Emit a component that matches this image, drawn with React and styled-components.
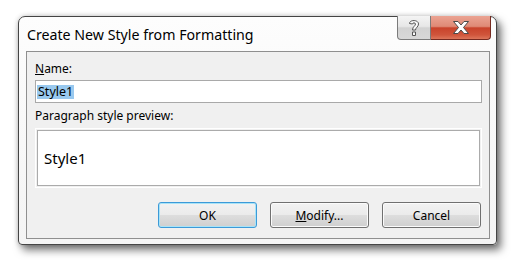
import React from "react";
import styled, { createGlobalStyle } from "styled-components";

const GlobalStyle = createGlobalStyle`
  html, body {
    margin: 0;
    padding: 0;
    background: #ffffff;
  }
  body {
    font-family: "Noto Sans", "Open Sans", sans-serif;
    color: #000;
  }
`;

const Page = styled.div`
  width: 519px;
  height: 270px;
  box-sizing: border-box;
  padding: 16px 0 0 18px;
`;

const Window = styled.div`
  width: 479px;
  height: 229px;
  box-sizing: border-box;
  border: 1px solid #454545;
  border-radius: 7px 7px 4px 4px;
  background: linear-gradient(#fdfdfd, #f4f4f4);
  box-shadow: 4px 5px 9px rgba(0, 0, 0, 0.55), 0 0 5px rgba(0, 0, 0, 0.2);
  display: flex;
  flex-direction: column;
  padding: 0 6px 5px 7px;
`;

const TitleBar = styled.div`
  height: 34px;
  display: flex;
  align-items: center;
  justify-content: space-between;
`;

const Title = styled.span`
  font-size: 14.2px;
  padding-left: 1px;
  padding-top: 1px;
`;

const CaptionGroup = styled.div`
  align-self: flex-start;
  display: flex;
  margin-top: -1px;
  margin-right: -1px;
`;

const CaptionButton = styled.div`
  height: 24px;
  width: ${(p) => p.$w}px;
  box-sizing: border-box;
  display: flex;
  align-items: center;
  justify-content: center;
  border: 1px solid ${(p) => (p.$close ? "#762a20" : "#7b7b7b")};
  border-top: none;
  border-left: ${(p) => (p.$close ? "none" : undefined)};
  border-radius: ${(p) => (p.$close ? "0 0 4px 0" : "0 0 0 4px")};
  background: ${(p) =>
    p.$close
      ? "linear-gradient(#eba493 0%, #df8a76 45%, #c9432b 52%, #d0553b 82%, #dd765b 100%)"
      : "linear-gradient(#f4f4f4 0%, #e7e7e7 45%, #d2d2d2 52%, #d8d8d8 100%)"};
`;

const Client = styled.div`
  flex: 1;
  border: 1px solid #8f8f8f;
  background: #f0f0f0;
  display: flex;
  flex-direction: column;
  padding: 9px 7px 10px 8px;
`;

const Label = styled.div`
  font-size: 12px;
  line-height: 16px;
  margin-bottom: ${(p) => p.$gap}px;
`;

const Input = styled.div`
  height: 23px;
  box-sizing: border-box;
  border: 1px solid #a9a9a9;
  background: #fff;
  display: flex;
  align-items: center;
  padding-left: 1px;
  margin-bottom: 5px;
`;

const Selected = styled.span`
  background: #99c9ef;
  font-size: 12.5px;
  line-height: 14px;
  padding: 0 1px;
`;

const PreviewFrame = styled.div`
  height: 60px;
  box-sizing: border-box;
  border: 1px solid #fff;
  padding: 1px;
  display: flex;
  margin-top: 4px;
`;

const Preview = styled.div`
  flex: 1;
  border: 1px solid #ababab;
  background: #fff;
  display: flex;
  align-items: center;
  padding-left: 6px;
  font-size: 15px;
`;

const ButtonRow = styled.div`
  margin-top: auto;
  display: flex;
  justify-content: flex-end;
  gap: 13px;
  padding-right: 1px;
`;

const Button = styled.div`
  width: 99px;
  height: 26px;
  box-sizing: border-box;
  border: 1px solid ${(p) => (p.$default ? "#3c9ad8" : "#707070")};
  border-radius: 3px;
  display: flex;
  align-items: center;
  justify-content: center;
  font-size: 12px;
  background: linear-gradient(#f2f2f2 0%, #ebebeb 48%, #dddddd 52%, #cfcfcf 100%);
  box-shadow: inset 0 0 0 1px ${(p) => (p.$default ? "#a8e3f7" : "#fbfbfb")};
`;

const HelpGlyph = () => (
  <svg width="12" height="18" viewBox="0 0 12 18">
    <path
      d="M1.5 4.5 C1.5 0.5 10.5 0.5 10.5 5 C10.5 8 7.5 8.5 7.5 11 L4.5 11 C4.5 7.5 7.5 7 7.5 5 C7.5 3.5 4.5 3.5 4.5 5 Z M4.5 13 L7.5 13 L7.5 16.5 L4.5 16.5 Z"
      fill="#fafafa"
      stroke="#555"
      strokeWidth="1"
      strokeLinejoin="round"
    />
  </svg>
);

const CloseGlyph = () => (
  <svg width="18" height="15" viewBox="0 0 18 15">
    <path
      d="M1.5 1.5 L6 1.5 L9 5 L12 1.5 L16.5 1.5 L11.5 7.5 L16.5 13.5 L12 13.5 L9 10 L6 13.5 L1.5 13.5 L6.5 7.5 Z"
      fill="#ffffff"
      stroke="#4a4a4a"
      strokeWidth="1"
      strokeLinejoin="round"
    />
  </svg>
);

export default function App() {
  return (
    <Page>
      <GlobalStyle />
      <Window>
        <TitleBar>
          <Title>Create New Style from Formatting</Title>
          <CaptionGroup>
            <CaptionButton $w={34}>
              <HelpGlyph />
            </CaptionButton>
            <CaptionButton $w={60} $close>
              <CloseGlyph />
            </CaptionButton>
          </CaptionGroup>
        </TitleBar>
        <Client>
          <Label $gap={3}>
            <u>N</u>ame:
          </Label>
          <Input>
            <Selected>Style1</Selected>
          </Input>
          <Label $gap={0}>Paragraph style preview:</Label>
          <PreviewFrame>
            <Preview>Style1</Preview>
          </PreviewFrame>
          <ButtonRow>
            <Button $default>OK</Button>
            <Button>
              <span>
                <u>M</u>odify...
              </span>
            </Button>
            <Button>Cancel</Button>
          </ButtonRow>
        </Client>
      </Window>
    </Page>
  );
}
